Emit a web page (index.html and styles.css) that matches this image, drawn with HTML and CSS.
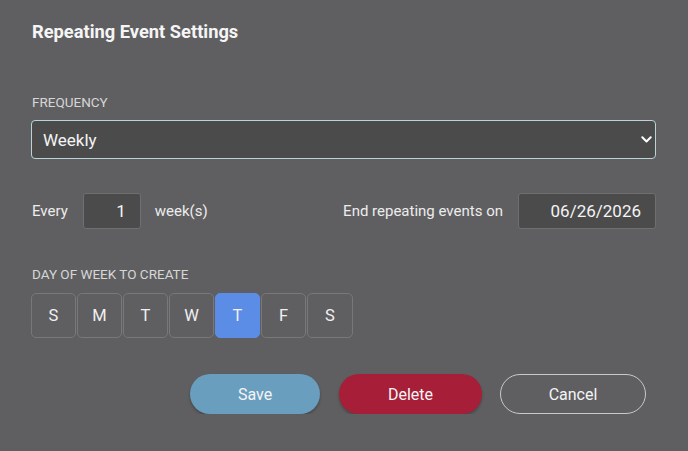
FILE: index.html
```html
<!DOCTYPE html>
<html>
<head>
<meta charset="utf-8">
<link rel="stylesheet" href="styles.css">
</head>
<body>
<div class="dialog">
  <h1 class="title">Repeating Event Settings</h1>
  <div class="label label-freq">FREQUENCY</div>
  <div class="select">
    <span>Weekly</span>
    <svg class="chev" width="11" height="7" viewBox="0 0 11 7"><path d="M1.3 1.3 L5.5 5.5 L9.7 1.3" fill="none" stroke="#fff" stroke-width="2" stroke-linecap="round" stroke-linejoin="round"/></svg>
  </div>
  <div class="row">
    <span class="txt">Every</span>
    <div class="field num">1</div>
    <span class="txt">week(s)</span>
    <span class="spacer"></span>
    <span class="txt">End repeating events on</span>
    <div class="field date">06/26/2026</div>
  </div>
  <div class="label label-days">DAY OF WEEK TO CREATE</div>
  <div class="days">
    <div class="day">S</div>
    <div class="day">M</div>
    <div class="day">T</div>
    <div class="day">W</div>
    <div class="day active">T</div>
    <div class="day">F</div>
    <div class="day">S</div>
  </div>
  <div class="actions">
    <button class="btn save">Save</button>
    <button class="btn delete">Delete</button>
    <button class="btn cancel">Cancel</button>
  </div>
</div>
</body>
</html>
```
FILE: styles.css
```css
html, body {
  margin: 0;
  padding: 0;
  background: #5f5f61;
  font-family: Roboto, "Liberation Sans", sans-serif;
  color: #f2f2f2;
}
.dialog {
  padding: 22px 32px 0 31px;
}
.title {
  margin: 0 0 0 1px;
  font-size: 18.3px;
  font-weight: 700;
  line-height: 20px;
  color: #f5f5f5;
}
.label {
  font-size: 13.5px;
  line-height: 16px;
  color: #d6d6d6;
  margin-left: 1px;
}
.label-freq { margin-top: 52px; }
.select {
  margin-top: 10px;
  height: 37px;
  border: 1px solid #b9d3d6;
  border-radius: 4px;
  background: #4b4b4c;
  display: flex;
  align-items: center;
  justify-content: space-between;
  padding: 0 3px 0 11px;
  font-size: 17px;
  color: #f4f4f4;
}
.chev { display: block; }
.row {
  margin-top: 34px;
  height: 36px;
  display: flex;
  align-items: center;
}
.txt {
  font-size: 15px;
  color: #ececec;
  margin-left: 1px;
}
.spacer { flex: 1; }
.field {
  height: 34px;
  border: 1px solid #6f6f71;
  border-radius: 3px;
  background: #4b4b4c;
  display: flex;
  align-items: center;
  justify-content: flex-end;
  font-size: 17px;
  color: #f4f4f4;
  box-sizing: content-box;
}
.num {
  width: 42px;
  padding-right: 14px;
  margin: 0 13px 0 15px;
}
.date {
  width: 122px;
  padding-right: 14px;
  margin-left: 15px;
}
.label-days { margin-top: 37px; }
.days {
  margin-top: 11px;
  display: flex;
  gap: 1px;
}
.day {
  width: 43px;
  height: 43px;
  border: 1px solid #78787a;
  border-radius: 5px;
  display: flex;
  align-items: center;
  justify-content: center;
  font-size: 16.5px;
  color: #f0f0f0;
}
.day:last-child { width: 44px; }
.day.active {
  background: #5b8de6;
  border-color: #5b8de6;
}
.actions {
  margin-top: 36px;
  margin-right: 10px;
  display: flex;
  justify-content: flex-end;
  gap: 18px;
}
.btn {
  height: 40px;
  border-radius: 20px;
  border: none;
  font-family: Roboto, "Liberation Sans", sans-serif;
  font-size: 16px;
  font-weight: 400;
  color: #f4f4f4;
  box-shadow: 0 2px 3px rgba(0,0,0,0.25);
  padding: 0;
}
.save {
  width: 130px;
  background: #6a9ebf;
  margin-right: 1px;
}
.delete {
  width: 143px;
  background: #a71e38;
}
.cancel {
  width: 146px;
  background: transparent;
  border: 1px solid #c9c9c9;
  box-shadow: none;
}
```
